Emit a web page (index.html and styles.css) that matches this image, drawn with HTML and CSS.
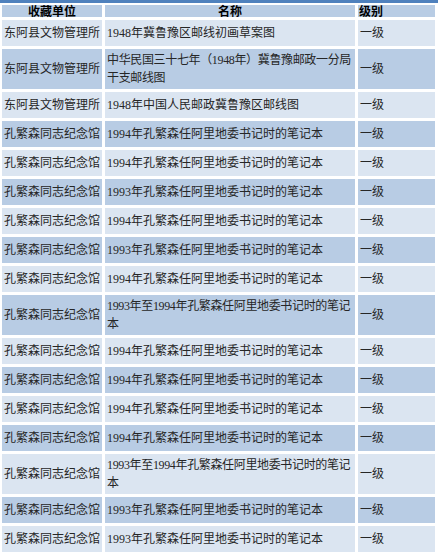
FILE: index.html
```html
<!DOCTYPE html>
<html lang="zh">
<head>
<meta charset="utf-8">
<title>藏品表</title>
<link rel="stylesheet" href="styles.css">
</head>
<body>
<div class="bar"></div>
<table class="grid">
  <colgroup>
    <col class="c1">
    <col class="c2">
    <col class="c3">
  </colgroup>
  <thead>
    <tr class="head">
      <th class="center">收藏单位</th>
      <th class="center">名称</th>
      <th class="left">级别</th>
    </tr>
  </thead>
  <tbody>
    <tr class="light"><td>东阿县文物管理所</td><td>1948年冀鲁豫区邮线初画草案图</td><td>一级</td></tr>
    <tr class="dark"><td>东阿县文物管理所</td><td class="tight">中华民国三十七年（1948年）冀鲁豫邮政一分局<br>干支邮线图</td><td>一级</td></tr>
    <tr class="light"><td>东阿县文物管理所</td><td>1948年中国人民邮政冀鲁豫区邮线图</td><td>一级</td></tr>
    <tr class="dark"><td>孔繁森同志纪念馆</td><td>1994年孔繁森任阿里地委书记时的笔记本</td><td>一级</td></tr>
    <tr class="light"><td>孔繁森同志纪念馆</td><td>1994年孔繁森任阿里地委书记时的笔记本</td><td>一级</td></tr>
    <tr class="dark"><td>孔繁森同志纪念馆</td><td>1993年孔繁森任阿里地委书记时的笔记本</td><td>一级</td></tr>
    <tr class="light"><td>孔繁森同志纪念馆</td><td>1994年孔繁森任阿里地委书记时的笔记本</td><td>一级</td></tr>
    <tr class="dark"><td>孔繁森同志纪念馆</td><td>1993年孔繁森任阿里地委书记时的笔记本</td><td>一级</td></tr>
    <tr class="light"><td>孔繁森同志纪念馆</td><td>1994年孔繁森任阿里地委书记时的笔记本</td><td>一级</td></tr>
    <tr class="dark"><td>孔繁森同志纪念馆</td><td class="tight">1993年至1994年孔繁森任阿里地委书记时的笔记<br>本</td><td>一级</td></tr>
    <tr class="light"><td>孔繁森同志纪念馆</td><td>1994年孔繁森任阿里地委书记时的笔记本</td><td>一级</td></tr>
    <tr class="dark"><td>孔繁森同志纪念馆</td><td>1994年孔繁森任阿里地委书记时的笔记本</td><td>一级</td></tr>
    <tr class="light"><td>孔繁森同志纪念馆</td><td>1994年孔繁森任阿里地委书记时的笔记本</td><td>一级</td></tr>
    <tr class="dark"><td>孔繁森同志纪念馆</td><td>1994年孔繁森任阿里地委书记时的笔记本</td><td>一级</td></tr>
    <tr class="light"><td>孔繁森同志纪念馆</td><td class="tight">1993年至1994年孔繁森任阿里地委书记时的笔记<br>本</td><td>一级</td></tr>
    <tr class="dark"><td>孔繁森同志纪念馆</td><td>1993年孔繁森任阿里地委书记时的笔记本</td><td>一级</td></tr>
    <tr class="light"><td>孔繁森同志纪念馆</td><td>1993年孔繁森任阿里地委书记时的笔记本</td><td>一级</td></tr>
  </tbody>
</table>
</body>
</html>
```

FILE: styles.css
```css
html, body {
  margin: 0;
  padding: 0;
  background: #ffffff;
}

body {
  font-family: "Liberation Serif", "Noto Sans CJK SC", serif;
  font-size: 12px;
  color: #262626;
  overflow: hidden;
}

.bar {
  height: 3px;
  background: #4f81bd;
}

.grid {
  table-layout: fixed;
  width: 439px;
  border-collapse: separate;
  border-spacing: 3px;
  margin: -1px 0 0 -1px;
}

.c1 { width: 100px; }
.c2 { width: 250px; }
.c3 { width: 77px; }

.head {
  height: 12px;
}

.head th {
  background: #b8cce4;
  font-family: "Noto Sans CJK SC", sans-serif;
  font-weight: 700;
  font-size: 12px;
  line-height: 12px;
  height: 12px;
  color: #000000;
  padding: 0 1px;
  white-space: nowrap;
}

.center { text-align: center; }
.left { text-align: left; }

tbody tr {
  height: 26px;
}

tbody td {
  padding: 2px 1px 2px 2px;
  line-height: 18px;
  vertical-align: middle;
  white-space: nowrap;
  text-align: left;
}

tbody td.tight {
  letter-spacing: -0.35px;
}

.light td { background: #dbe5f1; }
.dark td { background: #b8cce4; }
```
